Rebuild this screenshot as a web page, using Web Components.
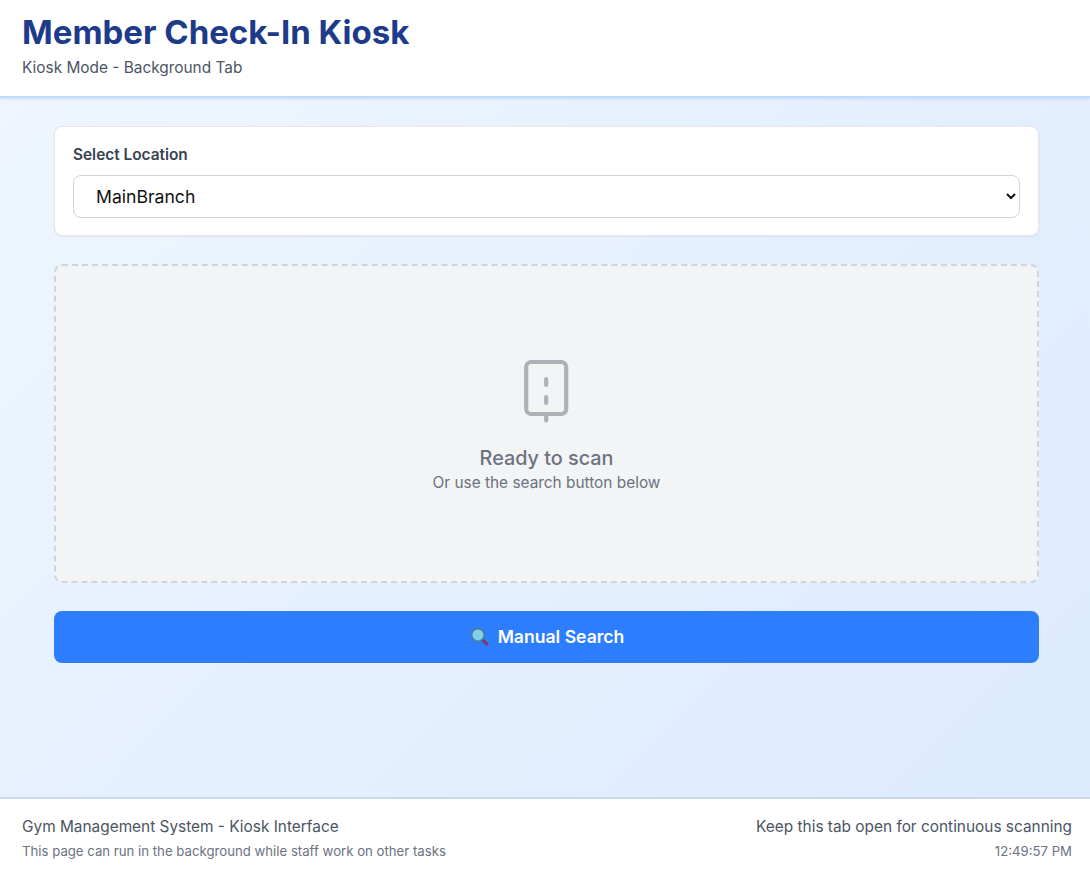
<!DOCTYPE html>
<html lang="en">
<head>
<meta charset="utf-8">
<title>Member Check-In Kiosk</title>
<style>
  html, body { height: 100%; }
  body {
    margin: 0;
    font-family: Inter, "Liberation Sans", sans-serif;
    background: linear-gradient(135deg, #eff6ff, #dbeafe);
  }
  kiosk-app { height: 871px; }
</style>
</head>
<body>
<kiosk-app>
  <kiosk-header slot="header" title-text="Member Check-In Kiosk" subtitle="Kiosk Mode - Background Tab"></kiosk-header>
  <location-card label="Select Location" value="MainBranch"></location-card>
  <scan-zone heading="Ready to scan" hint="Or use the search button below"></scan-zone>
  <search-button>Manual Search</search-button>
  <kiosk-footer slot="footer" clock="12:49:57 PM"></kiosk-footer>
</kiosk-app>

<script>
class KioskApp extends HTMLElement {
    constructor() {
        super()
        this.attachShadow({ mode: "open" });
        this.shadowRoot.innerHTML = `
            <style>
                :host {
                    display: flex;
                    flex-direction: column;
                }
                main {
                    flex: 1;
                    display: flex;
                    flex-direction: column;
                    gap: 28px;
                    padding: 28px 51px 0 54px;
                }
            </style>
            <slot name="header"></slot>
            <main><slot></slot></main>
            <slot name="footer"></slot>
        `;
    }
}

class KioskHeader extends HTMLElement {
    constructor() {
        super()
        this.attachShadow({ mode: "open" });
    }

    connectedCallback() {
        this.shadowRoot.innerHTML = `
            <style>
                :host {
                    display: block;
                    height: 98px;
                    box-sizing: border-box;
                    padding: 12px 22px 0;
                    background: #fff;
                    border-bottom: 2px solid #bfdbfe;
                    box-shadow: 0 1px 3px rgba(0, 0, 0, 0.1);
                }
                h1 {
                    margin: 0;
                    font-size: 33px;
                    line-height: 40px;
                    font-weight: 700;
                    color: #1e3a8a;
                }
                p {
                    margin: 5px 0 0;
                    font-size: 15.4px;
                    line-height: 22px;
                    color: #4b5563;
                }
            </style>
            <h1>${this.getAttribute("title-text")}</h1>
            <p>${this.getAttribute("subtitle")}</p>
        `;
    }
}

class LocationCard extends HTMLElement {
    constructor() {
        super()
        this.attachShadow({ mode: "open" });
    }

    connectedCallback() {
        const value = this.getAttribute("value");
        this.shadowRoot.innerHTML = `
            <style>
                :host {
                    display: block;
                    height: 110px;
                    box-sizing: border-box;
                    padding: 18px;
                    background: #fff;
                    border: 1px solid #e5e7eb;
                    border-radius: 8px;
                    box-shadow: 0 1px 2px rgba(0, 0, 0, 0.05);
                }
                label {
                    display: block;
                    margin-bottom: 10px;
                    font-size: 15.4px;
                    line-height: 20px;
                    font-weight: 600;
                    color: #374151;
                }
                select {
                    display: block;
                    width: 100%;
                    height: 42.5px;
                    box-sizing: border-box;
                    padding: 0 4px 0 18px;
                    background: #fff;
                    border: 1px solid #d1d5db;
                    border-radius: 8px;
                    font: 400 17.6px Inter, "Liberation Sans", sans-serif;
                    color: #111;
                }
            </style>
            <label for="loc">${this.getAttribute("label")}</label>
            <select id="loc"><option>${value}</option></select>
        `;
    }
}

class ScanZone extends HTMLElement {
    constructor() {
        super()
        this.attachShadow({ mode: "open" });
    }

    connectedCallback() {
        this.shadowRoot.innerHTML = `
            <style>
                :host {
                    display: flex;
                    flex-direction: column;
                    align-items: center;
                    justify-content: center;
                    height: 319.4px;
                    box-sizing: border-box;
                    padding-top: 3px;
                    background: #f3f4f6;
                    border: 2px dashed #d1d5db;
                    border-radius: 8px;
                }
                svg {
                    display: block;
                    width: 70.4px;
                    height: 70.4px;
                    margin-bottom: 19.6px;
                    color: #acb1b8;
                }
                h2 {
                    margin: 0 0 2.5px;
                    font-size: 19.8px;
                    line-height: 24px;
                    font-weight: 500;
                    color: #6b7280;
                }
                p {
                    margin: 0;
                    font-size: 15.4px;
                    line-height: 22px;
                    color: #6b7280;
                }
            </style>
            <svg viewBox="0 0 70.4 70.4" fill="none" stroke="currentColor" stroke-width="4.2" stroke-linecap="round" stroke-linejoin="round">
                <rect x="15.2" y="6" width="40" height="52" rx="5"/>
                <path d="M35.2 60v4.5M35.2 23v6M35.2 41v6"/>
            </svg>
            <h2>${this.getAttribute("heading")}</h2>
            <p>${this.getAttribute("hint")}</p>
        `;
    }
}

class SearchButton extends HTMLElement {
    constructor() {
        super()
        this.attachShadow({ mode: "open" });
        this.shadowRoot.innerHTML = `
            <style>
                :host {
                    display: block;
                }
                button {
                    display: flex;
                    align-items: center;
                    justify-content: center;
                    gap: 9px;
                    width: 100%;
                    height: 51.5px;
                    padding: 0 0 2px 1px;
                    background: #2d7eff;
                    border: none;
                    border-radius: 8px;
                    color: #fff;
                    font: 600 17.6px Inter, "Liberation Sans", sans-serif;
                    cursor: pointer;
                }
                svg {
                    width: 19px;
                    height: 19px;
                }
            </style>
            <button>
                <svg viewBox="0 0 18 18">
                    <path d="M11 11.5l5 4.6" stroke="#7a3b6e" stroke-width="3" stroke-linecap="round"/>
                    <circle cx="7.5" cy="7.5" r="6" fill="#7fd0ea" stroke="#4a7f9c" stroke-width="1.6"/>
                </svg>
                <slot></slot>
            </button>
        `;
    }
}

class KioskFooter extends HTMLElement {
    constructor() {
        super()
        this.attachShadow({ mode: "open" });
    }

    connectedCallback() {
        this.shadowRoot.innerHTML = `
            <style>
                :host {
                    display: flex;
                    justify-content: space-between;
                    height: 74px;
                    box-sizing: border-box;
                    padding: 17px 18px 0 22px;
                    background: #fff;
                    border-top: 2px solid #c9d9ee;
                }
                .right {
                    text-align: right;
                }
                .main {
                    font-size: 15.4px;
                    line-height: 22px;
                    color: #4b5563;
                }
                .sub {
                    margin-top: 4px;
                    font-size: 13.2px;
                    line-height: 18px;
                    color: #6b7280;
                }
            </style>
            <div>
                <div class="main">Gym Management System - Kiosk Interface</div>
                <div class="sub">This page can run in the background while staff work on other tasks</div>
            </div>
            <div class="right">
                <div class="main">Keep this tab open for continuous scanning</div>
                <div class="sub">${this.getAttribute("clock")}</div>
            </div>
        `;
    }
}

customElements.define("kiosk-app", KioskApp);
customElements.define("kiosk-header", KioskHeader);
customElements.define("location-card", LocationCard);
customElements.define("scan-zone", ScanZone);
customElements.define("search-button", SearchButton);
customElements.define("kiosk-footer", KioskFooter);
</script>
</body>
</html>
